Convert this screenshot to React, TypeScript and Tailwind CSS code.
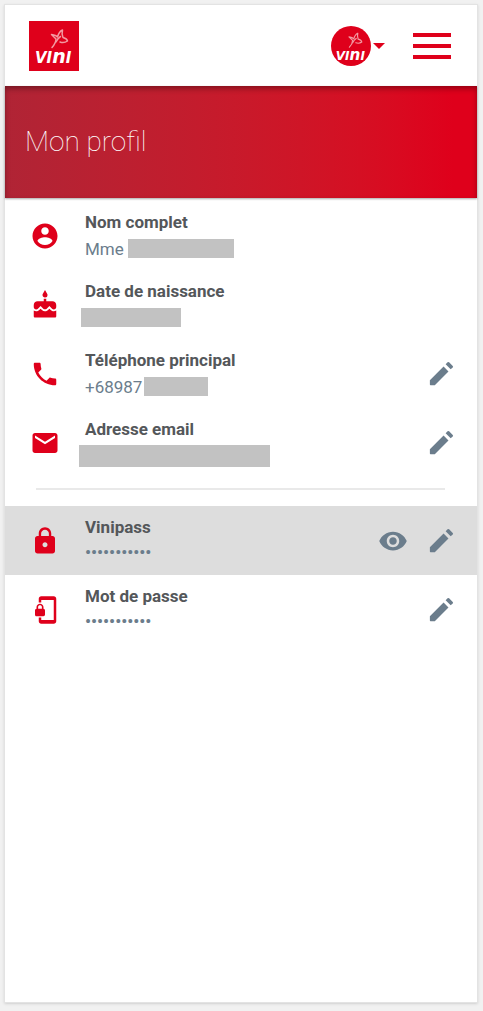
import { useId } from "react";
import type { ComponentType, ReactNode } from "react";
import { MdCake, MdEmail, MdLock, MdPhone, MdPhonelinkLock, MdRemoveRedEye } from "react-icons/md";

interface IconProps {
    className?: string;
}

interface ProfileRowProps {
    icon: ComponentType<IconProps>;
    label: string;
    children: ReactNode;
    highlighted?: boolean;
    canReveal?: boolean;
    canEdit?: boolean;
}

function AccountIcon({ className }: IconProps) {
    return (
        <svg viewBox="0 0 24 24" fill="currentColor" className={className} aria-hidden="true">
            <path d="M12 2C6.48 2 2 6.48 2 12s4.48 10 10 10 10-4.48 10-10S17.52 2 12 2zm0 3c1.66 0 3 1.34 3 3s-1.34 3-3 3-3-1.34-3-3 1.34-3 3-3zm0 14.2c-2.5 0-4.71-1.28-6-3.22.03-1.99 4-3.08 6-3.08 1.99 0 5.97 1.09 6 3.08-1.29 1.94-3.5 3.22-6 3.22z" />
        </svg>
    );
}

function PencilIcon({ className }: IconProps) {
    return (
        <svg viewBox="0 0 24 24" fill="currentColor" className={className} aria-hidden="true">
            <path d="M3 17.2V20.5q0 .5.5.5H6.8L17.4 10.4 13.6 6.6zM20.7 7.4q.6-.6 0-1.2L17.9 3.3q-.6-.6-1.2 0L15.2 4.9 19.1 8.8z" />
        </svg>
    );
}

function ViniLogo({ round = false }: { round?: boolean }) {
    const clipId = useId();

    return (
        <svg viewBox="0 0 50 50" className="size-full" role="img" aria-label="Vini">
            <clipPath id={clipId}>
                {round ? <circle cx="25" cy="25" r="25" /> : <rect width="50" height="50" />}
            </clipPath>
            <g clipPath={`url(#${clipId})`}>
                <rect width="50" height="50" fill="#df001b" />
                <g fill="none" stroke="#f29aa2" strokeWidth="1.5" strokeLinejoin="round" strokeLinecap="round">
                    <path d="M23 26.5 Q27 22 27 18 L22.5 13.5 Q27 14 28.5 16 Q30 10.5 33.5 9 Q32.5 13 34 16.5 Q38 17.5 38.5 20 Q35 22.5 31 21" />
                    <path d="M27 21 Q29 17 31.5 15.5" />
                </g>
                <text
                    x="6"
                    y="42"
                    fill="#fff"
                    fontFamily="DejaVu Sans, sans-serif"
                    fontWeight="700"
                    fontStyle="italic"
                    fontSize="15"
                >
                    VI<tspan fontSize="19">n</tspan>I
                </text>
            </g>
        </svg>
    );
}

function Redacted({ className }: { className: string }) {
    return <span className={`block bg-[#c2c2c2] ${className}`} />;
}

function MaskedValue() {
    return <span className="pb-1 font-semibold">•••••••••••</span>;
}

function ProfileRow({ icon: Icon, label, children, highlighted, canReveal, canEdit }: ProfileRowProps) {
    return (
        <li className={`flex h-[69px] items-center pr-5 pl-[25px] ${highlighted ? "bg-[#ddd]" : ""}`}>
            <Icon className="size-[30px] shrink-0 text-[#df001b]" />
            <div className="ml-[25px] min-w-0 flex-1 text-[17px] leading-[26px]">
                <h2 className="font-bold text-[#54575a]">{label}</h2>
                <div className="flex h-7 items-center text-[#6b7d8c]">{children}</div>
            </div>
            {canReveal && (
                <button type="button" aria-label={`Afficher ${label}`} className="mr-[18px] text-[#6b7d8c]">
                    <MdRemoveRedEye className="size-[30px]" />
                </button>
            )}
            {canEdit && (
                <button type="button" aria-label={`Modifier ${label}`} className="text-[#6b7d8c]">
                    <PencilIcon className="size-[31px]" />
                </button>
            )}
        </li>
    );
}

export default function App() {
    return (
        <div className="flex min-h-screen flex-col bg-[#f1f1f1] pt-1 pr-[5px] pb-2 pl-1 font-['Roboto',sans-serif]">
            <div className="flex flex-1 flex-col border border-[#e3e3e3] bg-white shadow-sm">
                <header className="flex h-[81px] items-center justify-between pr-[26px] pl-6">
                    <a href="#accueil" className="block size-[50px]">
                        <ViniLogo />
                    </a>
                    <div className="flex items-center gap-7">
                        <button type="button" aria-label="Mon compte" className="flex items-center gap-0.5">
                            <span className="block size-10">
                                <ViniLogo round />
                            </span>
                            <svg viewBox="0 0 12 6" className="h-1.5 w-3" fill="#df001b">
                                <path d="M0 0h12L6 6z" />
                            </svg>
                        </button>
                        <button type="button" aria-label="Menu" className="flex w-[38px] flex-col gap-[7px]">
                            <span className="h-1 bg-[#df001b]" />
                            <span className="h-1 bg-[#df001b]" />
                            <span className="h-1 bg-[#df001b]" />
                        </button>
                    </div>
                </header>

                <div className="flex h-28 items-center bg-linear-to-r from-[#b02435] to-[#df001b] to-95% px-5 shadow-[0_1px_2px_rgba(0,0,0,0.35),inset_0_3px_6px_-1px_rgba(0,0,0,0.4)]">
                    <h1 className="text-[28px] font-thin text-white">Mon profil</h1>
                </div>

                <main className="pt-[3px]">
                    <ul>
                        <ProfileRow icon={AccountIcon} label="Nom complet">
                            Mme
                            <Redacted className="ml-1 h-[19px] w-[106px]" />
                        </ProfileRow>
                        <ProfileRow icon={MdCake} label="Date de naissance">
                            <Redacted className="-ml-1 h-[19px] w-[100px]" />
                        </ProfileRow>
                        <ProfileRow icon={MdPhone} label="Téléphone principal" canEdit>
                            +68987
                            <Redacted className="ml-0.5 h-[19px] w-16" />
                        </ProfileRow>
                        <ProfileRow icon={MdEmail} label="Adresse email" canEdit>
                            <Redacted className="-ml-1.5 h-[22px] w-[191px]" />
                        </ProfileRow>
                    </ul>
                    <hr className="mt-[11px] mr-8 mb-4 ml-[31px] border-t-2 border-[#e9e9e9]" />
                    <ul>
                        <ProfileRow icon={MdLock} label="Vinipass" highlighted canReveal canEdit>
                            <MaskedValue />
                        </ProfileRow>
                        <ProfileRow icon={MdPhonelinkLock} label="Mot de passe" canEdit>
                            <MaskedValue />
                        </ProfileRow>
                    </ul>
                </main>
            </div>
        </div>
    );
}
